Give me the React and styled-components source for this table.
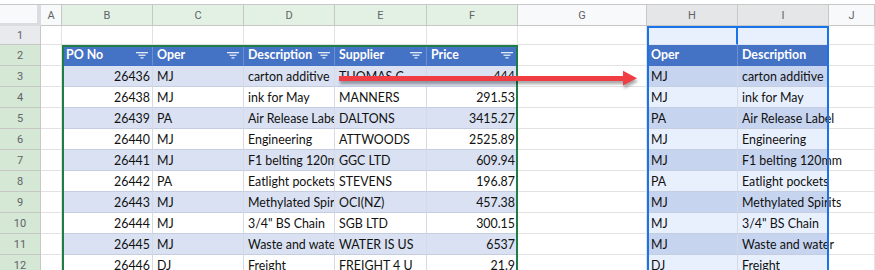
import styled, { createGlobalStyle, css } from "styled-components";

const GlobalStyle = createGlobalStyle`
  html, body {
    margin: 0;
    padding: 0;
    background: #fff;
    overflow: hidden;
  }
`;

const sheetTracks = css`
  display: grid;
  grid-template-columns: 41px 21px 91px 91px 91px 92px 91px 129px 91px 91px 1fr;
  grid-template-rows: 21px 19px repeat(11, 21px);
`;

const Page = styled.div`
  width: 875px;
  height: 270px;
  overflow: hidden;
  background: #fff;
`;

const TopStrip = styled.div`
  height: 4px;
  background: #fff;
  border-bottom: 1px solid #c7c7c7;
`;

const SheetWrap = styled.div`
  position: relative;
`;

const Sheet = styled.div`
  ${sheetTracks};
  font-family: Lato, "Liberation Sans", sans-serif;
`;

const Overlay = styled.div`
  ${sheetTracks};
  position: absolute;
  inset: 0;
  pointer-events: none;
`;

const Corner = styled.div`
  box-sizing: border-box;
  background: #f8f9fa;
  border-right: 4px solid #dadce0;
  border-bottom: 3px solid #dadce0;
`;

const ColHead = styled.div`
  box-sizing: border-box;
  display: flex;
  align-items: center;
  justify-content: center;
  background: ${(p) => p.$bg};
  border-right: 1px solid #c7c7c7;
  border-bottom: 1px solid #c7c7c7;
  font-family: Roboto, "Liberation Sans", sans-serif;
  font-size: 11px;
  color: #5f6368;
  overflow: hidden;
`;

const RowHead = styled.div`
  box-sizing: border-box;
  display: flex;
  align-items: center;
  justify-content: center;
  background: ${(p) => p.$bg};
  border-right: 1px solid #c7c7c7;
  border-bottom: 1px solid #c7c7c7;
  font-family: Roboto, "Liberation Sans", sans-serif;
  font-size: 11px;
  color: #5f6368;
`;

const Cell = styled.div`
  box-sizing: border-box;
  display: flex;
  align-items: flex-end;
  justify-content: ${(p) => (p.$right ? "flex-end" : "flex-start")};
  padding: 0 2px 2px 4px;
  background: ${(p) => p.$bg || "transparent"};
  border-right: ${(p) => p.$vw || 1}px solid ${(p) => p.$v || "#e2e2e2"};
  border-bottom: 1px solid ${(p) => p.$h || "#e2e2e2"};
  font-size: 12.4px;
  line-height: 14px;
  color: #111;
  white-space: nowrap;
  overflow: ${(p) => (p.$spill ? "visible" : "hidden")};
`;

const HeadCell = styled(Cell)`
  align-items: center;
  justify-content: space-between;
  padding: 0 4px 0 4px;
  color: #fff;
  font-weight: 700;
`;

const Frame = styled.div`
  grid-column: ${(p) => p.$cols};
  grid-row: ${(p) => p.$rows};
  box-sizing: border-box;
  border: 2px solid ${(p) => p.$color};
  border-bottom: none;
`;

const ArrowSlot = styled.div`
  grid-column: 6 / 9;
  grid-row: 4;

  svg {
    display: block;
    overflow: visible;
    filter: drop-shadow(1px 3px 1.5px rgba(0, 0, 0, 0.35));
  }
`;

const FilterIcon = () => (
  <svg width="12" height="7" viewBox="0 0 12 7">
    <rect x="0" y="0" width="12" height="1.3" fill="#e4eaf7" />
    <rect x="2.5" y="2.6" width="7" height="1.3" fill="#e4eaf7" />
    <rect x="4.5" y="5.2" width="3" height="1.3" fill="#e4eaf7" />
  </svg>
);

const HEADER_BLUE = "#4472c4";
const BAND = "#d9e1f2";
const SEL = "#e8f0fe";
const SEL_BAND = "#c6d4ef";
const TABLE_V = "#d6dae4";
const TABLE_H = "#c5cde0";

const headers = ["PO No", "Oper", "Description", "Supplier", "Price"];

const orders = [
  [26436, "MJ", "carton additive", "THOMAS C", "444"],
  [26438, "MJ", "ink for May", "MANNERS", "291.53"],
  [26439, "PA", "Air Release Label", "DALTONS", "3415.27"],
  [26440, "MJ", "Engineering", "ATTWOODS", "2525.89"],
  [26441, "MJ", "F1 belting 120mm", "GGC LTD", "609.94"],
  [26442, "PA", "Eatlight pockets", "STEVENS", "196.87"],
  [26443, "MJ", "Methylated Spirits", "OCI(NZ)", "457.38"],
  [26444, "MJ", '3/4" BS Chain', "SGB LTD", "300.15"],
  [26445, "MJ", "Waste and water", "WATER IS US", "6537"],
  [26446, "DJ", "Freight", "FREIGHT 4 U", "21.9"],
];

const colHeads = [
  ["A", "#f8f9fa"],
  ["B", "#e3f1e4"],
  ["C", "#e3f1e4"],
  ["D", "#e3f1e4"],
  ["E", "#e3f1e4"],
  ["F", "#e3f1e4"],
  ["G", "#f8f9fa"],
  ["H", "#e5e6e8"],
  ["I", "#e5e6e8"],
  ["J", "#f8f9fa"],
];

function SheetRow({ n }) {
  const rowBg = n === 1 ? "#e8eaed" : "#d5e8d6";
  const head = <RowHead $bg={rowBg}>{n}</RowHead>;

  if (n === 1) {
    return (
      <>
        {head}
        {Array.from({ length: 7 }).map((_, i) => (
          <Cell key={i} />
        ))}
        <Cell $bg={SEL} $v="#1a73e8" $vw={2} $h="#dfe6f3" />
        <Cell $bg={SEL} $h="#dfe6f3" />
        <Cell />
      </>
    );
  }

  if (n === 2) {
    return (
      <>
        {head}
        <Cell />
        {headers.map((h) => (
          <HeadCell key={h} $bg={HEADER_BLUE} $v="#6a8fd3" $h={HEADER_BLUE}>
            <span>{h}</span>
            <FilterIcon />
          </HeadCell>
        ))}
        <Cell />
        <HeadCell $bg={HEADER_BLUE} $v="#6a8fd3" $h={HEADER_BLUE}>
          <span>Oper</span>
        </HeadCell>
        <HeadCell $bg={HEADER_BLUE} $h={HEADER_BLUE}>
          <span>Description</span>
        </HeadCell>
        <Cell />
      </>
    );
  }

  const [po, oper, desc, supplier, price] = orders[n - 3];
  const banded = n % 2 === 1;
  const bg = banded ? BAND : "#fff";
  const selBg = banded ? SEL_BAND : SEL;

  return (
    <>
      {head}
      <Cell />
      <Cell $bg={bg} $v={TABLE_V} $h={TABLE_H} $right>
        {po}
      </Cell>
      <Cell $bg={bg} $v={TABLE_V} $h={TABLE_H}>
        {oper}
      </Cell>
      <Cell $bg={bg} $v={TABLE_V} $h={TABLE_H}>
        {desc}
      </Cell>
      <Cell $bg={bg} $v={TABLE_V} $h={TABLE_H}>
        {supplier}
      </Cell>
      <Cell $bg={bg} $v={TABLE_V} $h={TABLE_H} $right>
        {price}
      </Cell>
      <Cell />
      <Cell $bg={selBg} $v={TABLE_V} $h={TABLE_H}>
        {oper}
      </Cell>
      <Cell $bg={selBg} $v={TABLE_V} $h={TABLE_H} $spill>
        {desc}
      </Cell>
      <Cell />
    </>
  );
}

export default function App() {
  return (
    <Page>
      <GlobalStyle />
      <TopStrip />
      <SheetWrap>
        <Sheet>
          <Corner />
          {colHeads.map(([c, bg]) => (
            <ColHead key={c} $bg={bg}>
              {c}
            </ColHead>
          ))}
          {Array.from({ length: 12 }).map((_, i) => (
            <SheetRow key={i} n={i + 1} />
          ))}
        </Sheet>
        <Overlay>
          <Frame $cols="3 / 8" $rows="3 / -1" $color="#1e7e45" />
          <Frame $cols="9 / 11" $rows="2 / -1" $color="#1a73e8" />
          <ArrowSlot>
            <svg width="312" height="21" viewBox="0 0 312 21">
              <polygon
                points="4,10 288,10 288,4.7 302,12.3 288,19.5 288,15 4,15"
                fill="#f03c43"
              />
            </svg>
          </ArrowSlot>
        </Overlay>
      </SheetWrap>
    </Page>
  );
}
